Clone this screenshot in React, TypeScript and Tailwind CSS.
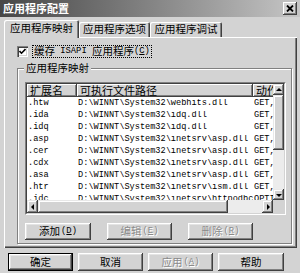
const rows = [
  ['.htw', 'D:\\WINNT\\System32\\webhits.dll', 'GET,'],
  ['.ida', 'D:\\WINNT\\System32\\idq.dll', 'GET,'],
  ['.idq', 'D:\\WINNT\\System32\\idq.dll', 'GET,'],
  ['.asp', 'D:\\WINNT\\System32\\inetsrv\\asp.dll', 'GET,'],
  ['.cer', 'D:\\WINNT\\System32\\inetsrv\\asp.dll', 'GET,'],
  ['.cdx', 'D:\\WINNT\\System32\\inetsrv\\asp.dll', 'GET,'],
  ['.asa', 'D:\\WINNT\\System32\\inetsrv\\asp.dll', 'GET,'],
  ['.htr', 'D:\\WINNT\\System32\\inetsrv\\ism.dll', 'GET,'],
  ['.idc', 'D:\\WINNT\\System32\\inetsrv\\httpodbc.dll', 'OPTI'],
]

function Arrow({ dir, h = 'h-[11px]' }: { dir: 'up' | 'down' | 'left' | 'right'; h?: string }) {
  const pts = {
    up: '1,5 4,2 7,5',
    down: '1,3 4,6 7,3',
    left: '5,1 2,4 5,7',
    right: '3,1 6,4 3,7',
  }[dir]
  return (
    <div className={`w-[11px] ${h} shrink-0 flex items-center justify-center bg-[#d3d3d3] shadow-[inset_-1px_-1px_0_#404040,inset_1px_1px_0_#e8e8e8,inset_-2px_-2px_0_#808080,inset_2px_2px_0_#fff]`}>
      <svg width="8" height="8" viewBox="0 0 8 8">
        <polygon points={pts} fill="#000" />
      </svg>
    </div>
  )
}

function Button({
  label,
  mn,
  disabled,
  def,
  w = 'w-[65px]',
  h = 'h-[18px]',
}: {
  label: string
  mn?: string
  disabled?: boolean
  def?: boolean
  w?: string
  h?: string
}) {
  return (
    <div
      className={`${w} ${h} flex items-center justify-center bg-[#d3d3d3] shadow-[inset_-1px_-1px_0_#404040,inset_1px_1px_0_#fff,inset_-2px_-2px_0_#808080,inset_2px_2px_0_#e4e4e4] ${
        def ? 'border border-black' : ''
      } ${disabled ? 'text-[#8a8a8a] [text-shadow:1px_1px_0_#fff]' : 'text-black'}`}
    >
      <span className="text-[10.5px] leading-none">{label}</span>
      {mn && (
        <span className="text-[8.8px] leading-none font-['Liberation_Mono',monospace] ml-[1px]">
          (<u>{mn}</u>)
        </span>
      )}
    </div>
  )
}

export default function App() {
  return (
    <div className="w-[300px] h-[273px] bg-[#d3d3d3] flex flex-col overflow-hidden font-['Noto_Sans_CJK_SC',sans-serif] select-none">
      {/* title bar */}
      <div className="h-[17px] flex items-center justify-between pl-[3px] pr-[3px] bg-gradient-to-r from-[#474747] to-[#c6c6c6]">
        <span className="text-white font-bold text-[11px] leading-none">应用程序配置</span>
        <div className="w-[14px] h-[13px] flex items-center justify-center bg-[#d3d3d3] shadow-[inset_-1px_-1px_0_#404040,inset_1px_1px_0_#fff,inset_-2px_-2px_0_#808080]">
          <svg width="8" height="7" viewBox="0 0 8 7">
            <path d="M1 0.5 L7 6.5 M7 0.5 L1 6.5" stroke="#000" strokeWidth="1.8" />
          </svg>
        </div>
      </div>

      <div className="mt-[3px] pl-[4px] pr-[3px]">
        {/* tabs */}
        <div className="flex items-end">
          <div className="relative z-10 w-[75px] h-[18px] -mb-px bg-[#d3d3d3] rounded-t-[2px] flex items-center justify-center pb-[1px] shadow-[inset_1px_1px_0_#fff,inset_-1px_0_0_#404040,inset_-2px_0_0_#808080]">
            <span className="text-[10.5px] leading-none">应用程序映射</span>
          </div>
          <div className="w-[71px] h-[15px] bg-[#d3d3d3] rounded-t-[2px] flex items-center justify-center shadow-[inset_1px_1px_0_#fff,inset_-1px_0_0_#404040,inset_-2px_0_0_#808080]">
            <span className="text-[10.5px] leading-none">应用程序选项</span>
          </div>
          <div className="w-[72px] h-[15px] bg-[#d3d3d3] rounded-t-[2px] flex items-center justify-center shadow-[inset_1px_1px_0_#fff,inset_-1px_0_0_#404040,inset_-2px_0_0_#808080]">
            <span className="text-[10.5px] leading-none">应用程序调试</span>
          </div>
        </div>

        {/* tab panel */}
        <div className="h-[211px] pl-[13px] pt-[8px] shadow-[inset_1px_1px_0_#fff,inset_-1px_-1px_0_#404040,inset_-2px_-2px_0_#808080]">
          <div className="h-[12px] flex items-center">
            <div className="w-[11px] h-[11px] bg-white flex items-center justify-center shadow-[inset_1px_1px_0_#808080,inset_2px_2px_0_#404040,inset_-1px_-1px_0_#fff,inset_-2px_-2px_0_#d3d3d3]">
              <svg width="7" height="7" viewBox="0 0 7 7">
                <path d="M0.5 3 L2.5 5.2 L6.5 1" stroke="#000" strokeWidth="1.6" fill="none" />
              </svg>
            </div>
            <div className="ml-[4px] h-[13px] px-[1px] border border-dotted border-black flex items-center">
              <span className="text-[10.5px] leading-none">缓存</span>
              <span className="text-[8.8px] leading-none font-['Liberation_Mono',monospace]">&nbsp;ISAPI&nbsp;</span>
              <span className="text-[10.5px] leading-none">应用程序</span>
              <span className="text-[8.8px] leading-none font-['Liberation_Mono',monospace]">
                (<u>C</u>)
              </span>
            </div>
          </div>

          {/* group box */}
          <div className="relative mt-[11px] w-[275px] h-[176px] border border-[#808080] shadow-[1px_1px_0_#fff,inset_1px_1px_0_#fff] pl-[7px] pt-[13px]">
            <span className="absolute -top-[7px] left-[6px] px-[2px] bg-[#d3d3d3] text-[10.5px] leading-[12px]">
              应用程序映射
            </span>

            {/* list view */}
            <div className="w-[261px] h-[133px] border-t border-l border-[#808080] border-r border-r-white border-b border-b-white">
              <div className="w-full h-full border-t border-l border-[#404040] border-r border-r-[#d3d3d3] border-b border-b-[#d3d3d3] bg-white flex flex-col">
                <div className="flex flex-1 min-h-0">
                  <div className="flex-1 min-w-0 overflow-hidden flex flex-col">
                    <div className="h-[13px] flex shrink-0 text-[11px] leading-[13px] whitespace-nowrap">
                      <div className="w-[50px] shrink-0 pl-[3px] bg-[#d3d3d3] shadow-[inset_-1px_-1px_0_#404040,inset_1px_1px_0_#fff,inset_-2px_-2px_0_#808080]">
                        扩展名
                      </div>
                      <div className="w-[176px] shrink-0 pl-[3px] bg-[#d3d3d3] shadow-[inset_-1px_-1px_0_#404040,inset_1px_1px_0_#fff,inset_-2px_-2px_0_#808080]">
                        可执行文件路径
                      </div>
                      <div className="w-[60px] shrink-0 pl-[3px] bg-[#d3d3d3] shadow-[inset_-1px_-1px_0_#404040,inset_1px_1px_0_#fff,inset_-2px_-2px_0_#808080]">
                        动作
                      </div>
                    </div>
                    {rows.map((r) => (
                      <div
                        key={r[0]}
                        className="h-[12px] flex shrink-0 items-center text-[8.6px] leading-none font-['Liberation_Mono',monospace] whitespace-nowrap"
                      >
                        <div className="w-[50px] shrink-0 pl-[1px]">{r[0]}</div>
                        <div className="w-[177px] shrink-0 pl-[1px] overflow-hidden">{r[1]}</div>
                        <div className="w-[40px] shrink-0">{r[2]}</div>
                      </div>
                    ))}
                  </div>
                  {/* vertical scrollbar */}
                  <div className="w-[11px] shrink-0 flex flex-col bg-[#ececec]">
                    <Arrow dir="up" />
                    <div className="h-[55px] shrink-0 bg-[#d3d3d3] shadow-[inset_-1px_-1px_0_#404040,inset_1px_1px_0_#e8e8e8,inset_-2px_-2px_0_#808080,inset_2px_2px_0_#fff]" />
                    <div className="flex-1" />
                    <Arrow dir="down" />
                  </div>
                </div>
                {/* horizontal scrollbar */}
                <div className="h-[13px] shrink-0 flex bg-[#ececec]">
                  <Arrow dir="left" h="h-[13px]" />
                  <div className="w-[190px] shrink-0 bg-[#d3d3d3] shadow-[inset_-1px_-1px_0_#404040,inset_1px_1px_0_#e8e8e8,inset_-2px_-2px_0_#808080,inset_2px_2px_0_#fff]" />
                  <div className="flex-1" />
                  <Arrow dir="right" h="h-[13px]" />
                  <div className="w-[11px] shrink-0 bg-[#d3d3d3]" />
                </div>
              </div>
            </div>

            <div className="mt-[8px] flex gap-[16px]">
              <Button label="添加" mn="D" h="h-[17px]" w="w-[66px]" />
              <Button label="编辑" mn="E" h="h-[17px]" disabled />
              <Button label="删除" mn="R" h="h-[17px]" disabled />
            </div>
          </div>
        </div>
      </div>

      {/* dialog buttons */}
      <div className="mt-[5px] pl-[8px] flex gap-[5px]">
        <Button label="确定" def />
        <Button label="取消" />
        <Button label="应用" mn="A" disabled />
        <Button label="帮助" w="w-[66px]" />
      </div>
    </div>
  )
}
